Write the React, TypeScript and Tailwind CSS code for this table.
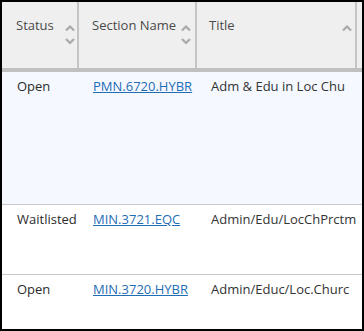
import React from 'react';

interface Section {
  id: string;
  status: string;
  sectionName: string;
  title: string;
  rowClass: string;
}

const sections: Section[] = [
  { id: '1', status: 'Open', sectionName: 'PMN.6720.HYBR', title: 'Adm & Edu in Loc Chu', rowClass: 'h-[133px] bg-[#f5f9ff] border-b border-[#c8c8c8]' },
  { id: '2', status: 'Waitlisted', sectionName: 'MIN.3721.EQC', title: 'Admin/Edu/LocChPrctm', rowClass: 'h-[70px] bg-white border-b border-[#c8c8c8]' },
  { id: '3', status: 'Open', sectionName: 'MIN.3720.HYBR', title: 'Admin/Educ/Loc.Churc', rowClass: 'h-[54px] bg-white' },
];

const SortIcon = ({ both = true }: { both?: boolean }) => (
  <svg width="10" height="20" viewBox="0 0 10 20" fill="none" stroke="#a9a9a9" strokeWidth="2.2" className="mt-[9px] shrink-0">
    <polyline points="1,5.5 5,1.5 9,5.5" />
    {both && <polyline points="1,14 5,18 9,14" />}
  </svg>
);

const App: React.FC = () => {
  return (
    <div
      className="w-[364px] h-[331px] border-2 border-black overflow-hidden bg-white text-[13px] leading-[18px]"
      style={{ fontFamily: '"Open Sans", "Liberation Sans", sans-serif' }}
    >
      <div className="w-[420px]">
        {/* header */}
        <div className="flex h-[70px] bg-[#efefef] border-b-4 border-[#c0c0c0] text-[#4a4a4a]">
          <div className="w-[77px] shrink-0 flex justify-between pl-[14px] pr-[2px] pt-[14px] border-r-2 border-[#c4c4c4]">
            <span>Status</span>
            <SortIcon />
          </div>
          <div className="w-[118px] shrink-0 flex justify-between pl-[13px] pr-[4px] pt-[14px] border-r-2 border-[#c4c4c4]">
            <span>Section Name</span>
            <SortIcon />
          </div>
          <div className="w-[160px] shrink-0 flex justify-between pl-[12px] pr-[3px] pt-[14px] border-r-2 border-[#c4c4c4]">
            <span>Title</span>
            <SortIcon both={false} />
          </div>
          <div className="flex-1" />
        </div>

        {/* rows */}
        {sections.map((s) => (
          <div key={s.id} className={`flex ${s.rowClass}`}>
            <div className="w-[77px] shrink-0 pl-[15px] pt-[5px] text-[#2b2b2b] whitespace-nowrap">{s.status}</div>
            <div className="w-[118px] shrink-0 pl-[14px] pt-[5px] whitespace-nowrap overflow-hidden">
              <a href="#" className="text-[#1f6db5] underline">{s.sectionName}</a>
            </div>
            <div className="w-[160px] shrink-0 pl-[14px] pt-[5px] text-[#333333] whitespace-nowrap overflow-hidden">{s.title}</div>
            <div className="flex-1" />
          </div>
        ))}
      </div>
    </div>
  );
};

export default App;
